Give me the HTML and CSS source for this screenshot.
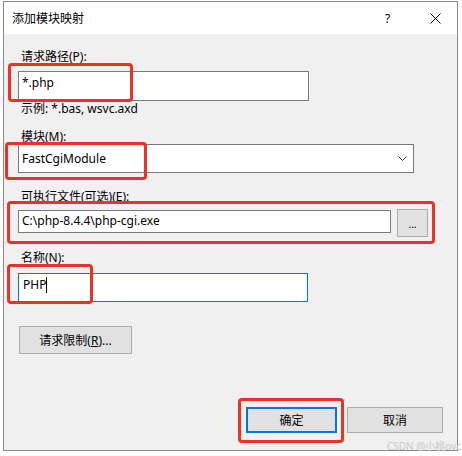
FILE: index.html
```html
<!DOCTYPE html>
<html lang="zh-CN">
<head>
    <meta charset="UTF-8">
    <title>添加模块映射</title>
    <link rel="stylesheet" href="styles.css">
</head>
<body>

<div class="dialog">
    <div class="titlebar">
        <span class="title">添加模块映射</span>
        <span class="help">?</span>
        <span class="close">
            <svg width="11" height="11" viewBox="0 0 11 11"><path d="M0.5 0.5 L10.5 10.5 M10.5 0.5 L0.5 10.5" stroke="#000" stroke-width="1" fill="none"/></svg>
        </span>
    </div>

    <div class="content">
        <div class="label first">请求路径(P):</div>
        <div class="field path">*.php</div>
        <div class="hint">示例: *.bas, wsvc.axd</div>

        <div class="label">模块(M):</div>
        <div class="field select">
            <span>FastCgiModule</span>
            <svg width="9" height="5" viewBox="0 0 9 5"><path d="M0.5 0.5 L4.5 4.5 L8.5 0.5" stroke="#333" stroke-width="1" fill="none"/></svg>
        </div>

        <div class="label exe-label">可执行文件(可选)(E):</div>
        <div class="file-row">
            <div class="field exe">C:\php-8.4.4\php-cgi.exe</div>
            <div class="btn browse">...</div>
        </div>

        <div class="label name-label">名称(N):</div>
        <div class="field name">PHP<span class="caret"></span></div>

        <div class="btn limits">请求限制(<u>R</u>)...</div>
    </div>

    <div class="footer">
        <div class="btn ok">确定</div>
        <div class="btn cancel">取消</div>
    </div>
</div>

<!-- red annotation boxes drawn over the screenshot -->
<div class="mark m1"></div>
<div class="mark m2"></div>
<div class="mark m3"></div>
<div class="mark m4"></div>
<div class="mark m5"></div>

<div class="watermark">CSDN @小桃ovc</div>

</body>
</html>
```

FILE: styles.css
```css
body {
    margin: 0;
    background-color: #fff;
    font-family: "Noto Sans", "Noto Sans CJK SC", sans-serif;
    font-size: 12px;
    color: #000;
}
.dialog {
    position: relative;
    margin: 1px 0 0 3px;
    width: 453px;
    height: 448px;
    border: 1px solid #8a8a8a;
    background-color: #f0f0f0;
    display: flex;
    flex-direction: column;
}
.titlebar {
    height: 32px;
    background-color: #fff;
    display: flex;
    align-items: center;
    padding-left: 8px;
}
.title {
    flex: 1;
    font-size: 12px;
}
.help {
    font-size: 12px;
    width: 14px;
    margin-right: 31px;
}
.close {
    display: flex;
    margin-right: 16px;
}
.content {
    flex: 1;
    padding: 16px 0 0 14px;
}
.label {
    line-height: 14px;
    margin-top: 14px;
    padding-left: 3px;
}
.label.first {
    margin-top: 0;
}
.field {
    box-sizing: border-box;
    background-color: #fff;
    border: 1px solid #7a7a7a;
    padding-left: 3px;
    line-height: 16px;
    white-space: nowrap;
}
.path {
    width: 291px;
    height: 30px;
    margin-top: 7px;
    padding-top: 3px;
}
.hint {
    line-height: 14px;
    margin-top: 1px;
    padding-left: 3px;
}
.select {
    width: 396px;
    height: 29px;
    display: flex;
    align-items: center;
    justify-content: space-between;
    padding-right: 6px;
}
.exe-label {
    margin-top: 17px;
}
.file-row {
    display: flex;
    align-items: flex-start;
    gap: 6px;
    margin-top: 5px;
}
.exe {
    width: 373px;
    height: 23px;
    margin-top: 1px;
    padding-top: 2px;
}
.name-label {
    margin-top: 14px;
}
.name {
    width: 290px;
    height: 29px;
    margin-top: 8px;
    padding-top: 3px;
    padding-left: 4px;
    border-color: #0078d7;
}
.caret {
    display: inline-block;
    width: 1px;
    height: 16px;
    background-color: #000;
    vertical-align: top;
}
.btn {
    box-sizing: border-box;
    background-color: #e1e1e1;
    border: 1px solid #adadad;
    display: flex;
    align-items: center;
    justify-content: center;
}
.browse {
    width: 31px;
    height: 28px;
    font-size: 10px;
    padding-top: 2px;
}
.limits {
    width: 113px;
    height: 28px;
    margin: 24px 0 0 1px;
}
.footer {
    display: flex;
    justify-content: flex-end;
    gap: 10px;
    padding: 0 14px 17px 0;
}
.ok {
    width: 91px;
    height: 26px;
    border: 2px solid #0078d7;
}
.cancel {
    width: 96px;
    height: 26px;
}
.mark {
    position: absolute;
    box-sizing: border-box;
    border: 3px solid #ea3324;
    border-radius: 4px;
}
.m1 { left: 8px; top: 63px; width: 125px; height: 39px; }
.m2 { left: 5px; top: 142px; width: 142px; height: 38px; }
.m3 { left: 7px; top: 201px; width: 428px; height: 43px; }
.m4 { left: 7px; top: 264px; width: 86px; height: 40px; }
.m5 { left: 238px; top: 398px; width: 106px; height: 45px; }
.watermark {
    position: absolute;
    left: 387px;
    top: 438px;
    font-size: 10px;
    color: #c8c8c8;
    white-space: nowrap;
}
```
